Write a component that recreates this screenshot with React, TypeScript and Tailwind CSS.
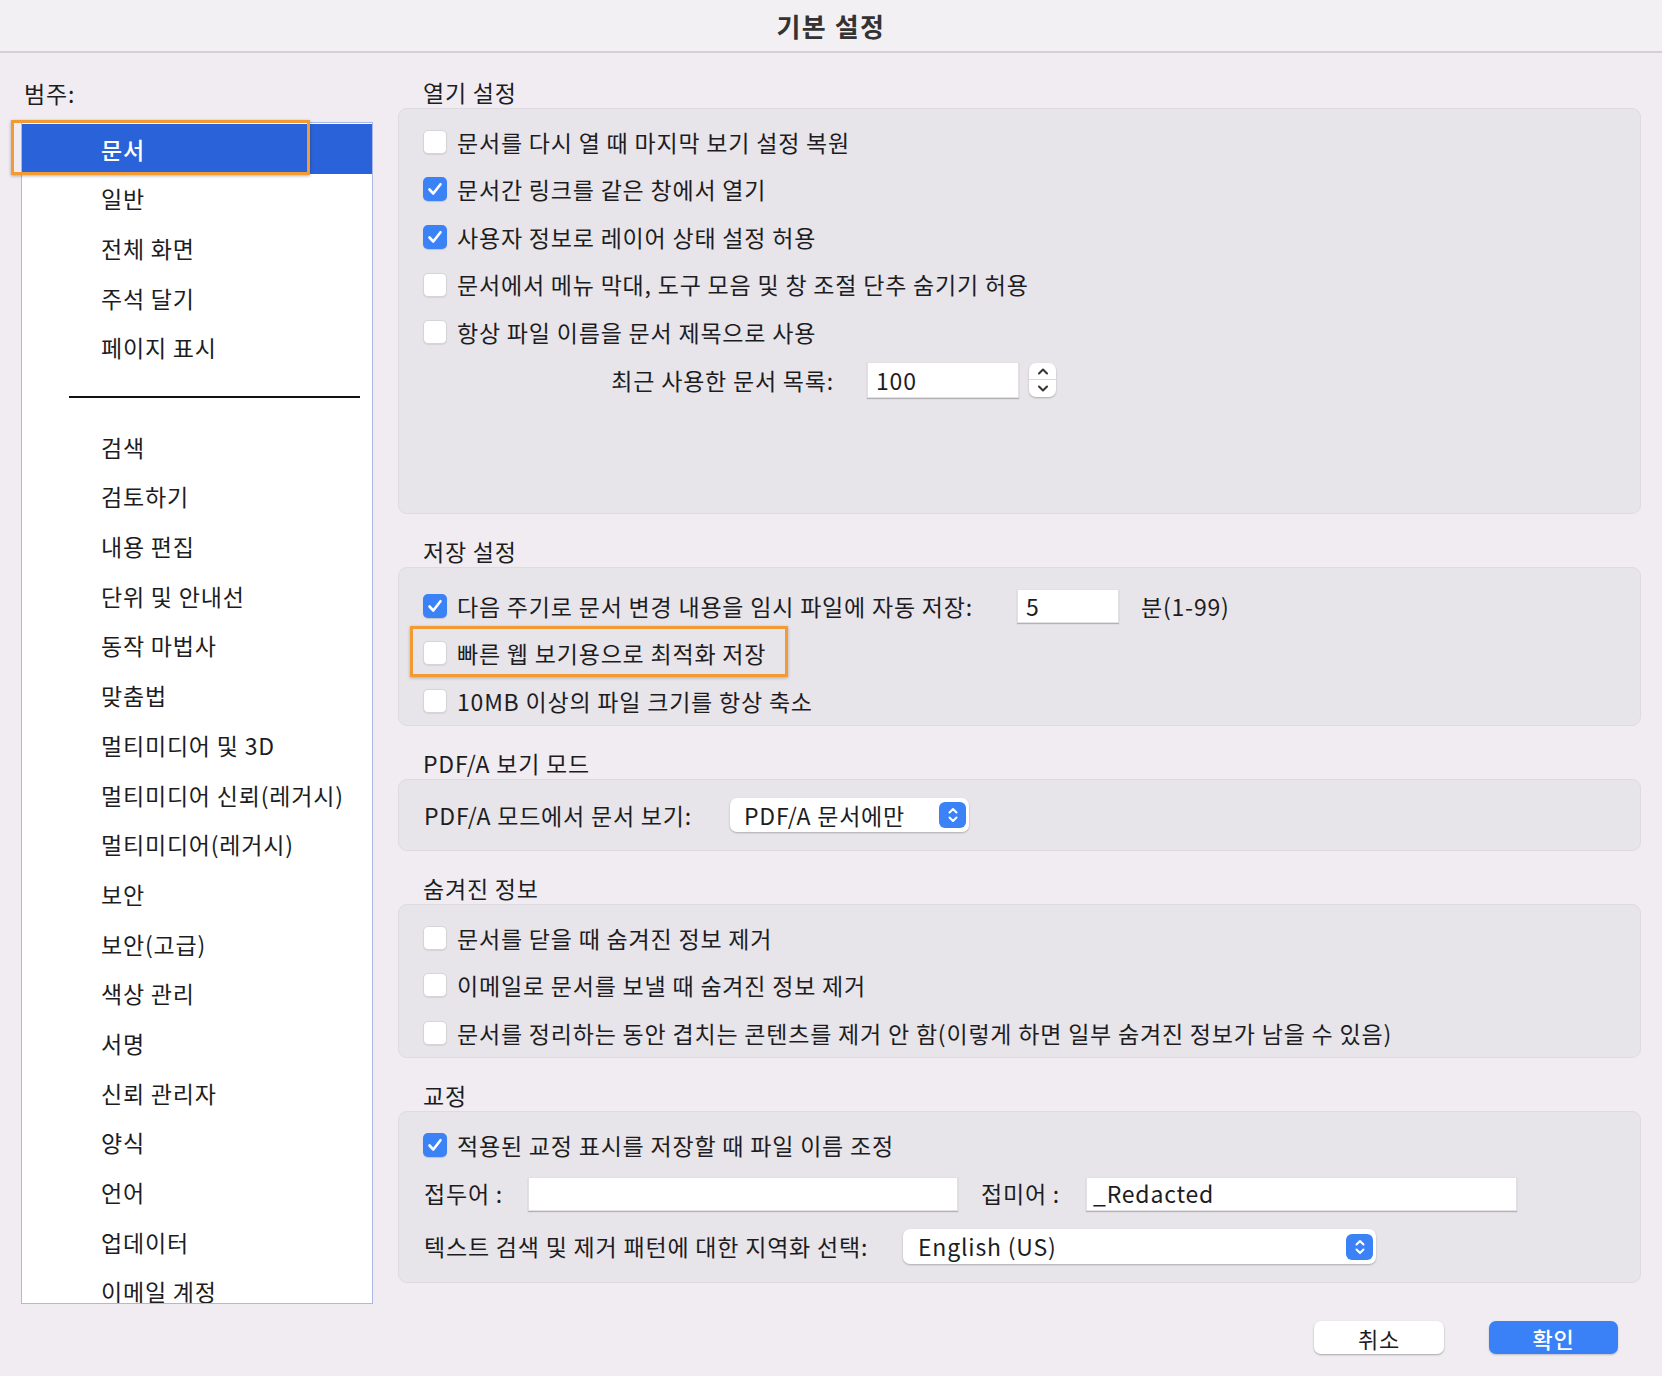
import React from 'react';

const font = "font-['Noto_Sans_CJK_KR','Noto_Sans',sans-serif]";

const categoriesTop = ['일반', '전체 화면', '주석 달기', '페이지 표시'];
const categoriesBottom = [
  '검색',
  '검토하기',
  '내용 편집',
  '단위 및 안내선',
  '동작 마법사',
  '맞춤법',
  '멀티미디어 및 3D',
  '멀티미디어 신뢰(레거시)',
  '멀티미디어(레거시)',
  '보안',
  '보안(고급)',
  '색상 관리',
  '서명',
  '신뢰 관리자',
  '양식',
  '언어',
  '업데이터',
  '이메일 계정',
];

const Checkbox = ({ checked }: { checked?: boolean }) =>
  checked ? (
    <span className="w-[24px] h-[24px] shrink-0 rounded-[5px] bg-[#3b82f7] flex items-center justify-center shadow-[0_1px_1px_rgba(0,0,0,0.15)]">
      <svg width="18" height="18" viewBox="0 0 18 18" fill="none">
        <path d="M3.5 9.5 L7.3 13.5 L14.5 4.2" stroke="white" strokeWidth="2.6" strokeLinecap="round" strokeLinejoin="round" />
      </svg>
    </span>
  ) : (
    <span className="w-[24px] h-[24px] shrink-0 rounded-[5px] bg-white border border-[#d6d3d9] shadow-[0_1px_1px_rgba(0,0,0,0.08)]" />
  );

const CheckRow = ({ label, checked }: { label: string; checked?: boolean }) => (
  <div className="h-[47.6px] flex items-center gap-[10px]">
    <Checkbox checked={checked} />
    <span className="whitespace-nowrap">{label}</span>
  </div>
);

const SectionTitle = ({ children, first }: { children: React.ReactNode; first?: boolean }) => (
  <div className={`h-[32px] leading-[32px] pl-[25px] ${first ? 'mt-[23px]' : 'mt-[21px]'}`}>{children}</div>
);

const Group = ({ className, children }: { className: string; children: React.ReactNode }) => (
  <div className={`relative rounded-[9px] bg-[#e7e4ea] border border-[#dedae1] ${className}`}>{children}</div>
);

const TextInput = ({ className, value }: { className: string; value?: string }) => (
  <div className={`bg-white border border-[#e2dfe5] shadow-[0_1px_1px_rgba(0,0,0,0.22)] flex items-center ${className}`}>
    {value}
  </div>
);

const BlueUpDown = () => (
  <span className="w-[27px] h-[26px] rounded-[6px] bg-[#3b82f7] flex items-center justify-center">
    <svg width="14" height="18" viewBox="0 0 14 18" fill="none">
      <path d="M3.5 6.5 L7 3 L10.5 6.5" stroke="white" strokeWidth="2" strokeLinecap="round" strokeLinejoin="round" />
      <path d="M3.5 11.5 L7 15 L10.5 11.5" stroke="white" strokeWidth="2" strokeLinecap="round" strokeLinejoin="round" />
    </svg>
  </span>
);

export default function App() {
  return (
    <div className={`w-[1662px] h-[1376px] bg-[#f0ecf1] text-[#1d1d1f] text-[23px] tracking-[0.8px] ${font} overflow-hidden flex flex-col`}>
      {/* 제목 표시줄 */}
      <div className="h-[53px] shrink-0 bg-[#f3f0f4] border-b-2 border-[#d3cfd5] flex items-center justify-center">
        <span className="text-[26px] font-bold text-[#333] tracking-[1.5px]">기본 설정</span>
      </div>

      <div className="flex flex-1">
        {/* 좌측 범주 */}
        <div className="w-[398px] shrink-0 pl-[21px]">
          <div className="h-[30px] leading-[30px] mt-[25px] mb-[14px] pl-[3px]">범주:</div>
          <div className="relative w-[352px]">
            <div className="h-[1182px] bg-white border border-[#a9b8e8] overflow-hidden pt-[1px]">
              <div className="h-[49.7px] flex items-center pl-[79px] bg-[#2a63d9] text-white font-medium">문서</div>
              {categoriesTop.map((c) => (
                <div key={c} className="h-[49.7px] flex items-center pl-[79px]">
                  {c}
                </div>
              ))}
              <div className="h-[49.7px] flex items-center">
                <div className="ml-[47px] w-[291px] h-[2px] bg-[#111]" />
              </div>
              {categoriesBottom.map((c) => (
                <div key={c} className="h-[49.7px] flex items-center pl-[79px] whitespace-nowrap">
                  {c}
                </div>
              ))}
            </div>
            <div className="absolute left-[-10px] top-[-2px] w-[299px] h-[55px] border-[3px] border-[#f29a34] shadow-[0_1px_3px_rgba(0,0,0,0.3)]" />
          </div>
        </div>

        {/* 우측 설정 */}
        <div className="w-[1243px] shrink-0">
          <SectionTitle first>열기 설정</SectionTitle>
          <Group className="h-[406px] pt-[9px] pl-[24px]">
            <CheckRow label="문서를 다시 열 때 마지막 보기 설정 복원" />
            <CheckRow label="문서간 링크를 같은 창에서 열기" checked />
            <CheckRow label="사용자 정보로 레이어 상태 설정 허용" checked />
            <CheckRow label="문서에서 메뉴 막대, 도구 모음 및 창 조절 단추 숨기기 허용" />
            <CheckRow label="항상 파일 이름을 문서 제목으로 사용" />
            <div className="h-[47.6px] flex items-center">
              <div className="w-[411px] text-right whitespace-nowrap">최근 사용한 문서 목록:</div>
              <TextInput className="ml-[33px] w-[152px] h-[36px] pl-[8px]" value="100" />
              <div className="ml-[10px] w-[27px] h-[34px] rounded-[7px] bg-white shadow-[0_1px_2px_rgba(0,0,0,0.25)] flex flex-col items-center">
                <div className="flex-1 flex items-center">
                  <svg width="14" height="9" viewBox="0 0 14 9" fill="none">
                    <path d="M3 6.5 L7 2.5 L11 6.5" stroke="#333" strokeWidth="2" strokeLinecap="round" strokeLinejoin="round" />
                  </svg>
                </div>
                <div className="w-full h-px bg-[#d9d6dc]" />
                <div className="flex-1 flex items-center">
                  <svg width="14" height="9" viewBox="0 0 14 9" fill="none">
                    <path d="M3 2.5 L7 6.5 L11 2.5" stroke="#333" strokeWidth="2" strokeLinecap="round" strokeLinejoin="round" />
                  </svg>
                </div>
              </div>
            </div>
          </Group>

          <SectionTitle>저장 설정</SectionTitle>
          <Group className="h-[159px] pt-[14px] pl-[24px]">
            <div className="h-[47.5px] flex items-center">
              <div className="w-[594px] flex items-center gap-[10px]">
                <Checkbox checked />
                <span className="whitespace-nowrap">다음 주기로 문서 변경 내용을 임시 파일에 자동 저장:</span>
              </div>
              <TextInput className="w-[102px] h-[34px] pl-[8px]" value="5" />
              <span className="ml-[22px]">분(1-99)</span>
            </div>
            <CheckRow label="빠른 웹 보기용으로 최적화 저장" />
            <CheckRow label="10MB 이상의 파일 크기를 항상 축소" />
            <div className="absolute left-[11px] top-[58px] w-[378px] h-[51px] border-[3px] border-[#f29a34] shadow-[0_1px_3px_rgba(0,0,0,0.25)]" />
          </Group>

          <SectionTitle>PDF/A 보기 모드</SectionTitle>
          <Group className="h-[72px] pl-[25px] flex items-center">
            <div className="w-[306px] whitespace-nowrap">PDF/A 모드에서 문서 보기:</div>
            <div className="w-[239px] h-[34px] rounded-[7px] bg-white shadow-[0_1px_2px_rgba(0,0,0,0.25)] flex items-center justify-between pl-[14px] pr-[3px]">
              <span>PDF/A 문서에만</span>
              <BlueUpDown />
            </div>
          </Group>

          <SectionTitle>숨겨진 정보</SectionTitle>
          <Group className="h-[154px] pt-[9px] pl-[24px]">
            <CheckRow label="문서를 닫을 때 숨겨진 정보 제거" />
            <CheckRow label="이메일로 문서를 보낼 때 숨겨진 정보 제거" />
            <CheckRow label="문서를 정리하는 동안 겹치는 콘텐츠를 제거 안 함(이렇게 하면 일부 숨겨진 정보가 남을 수 있음)" />
          </Group>

          <SectionTitle>교정</SectionTitle>
          <Group className="h-[172px] pt-[9px] pl-[24px]">
            <CheckRow label="적용된 교정 표시를 저장할 때 파일 이름 조정" checked />
            <div className="h-[50px] flex items-center pl-[1px]">
              <div className="w-[104px]">접두어 :</div>
              <TextInput className="w-[430px] h-[34px]" />
              <div className="ml-[23px] w-[105px]">접미어 :</div>
              <TextInput className="w-[431px] h-[34px] pl-[6px]" value="_Redacted" />
            </div>
            <div className="h-[56px] flex items-center pl-[1px]">
              <div className="w-[479px] whitespace-nowrap">텍스트 검색 및 제거 패턴에 대한 지역화 선택:</div>
              <div className="w-[473px] h-[35px] rounded-[7px] bg-white shadow-[0_1px_2px_rgba(0,0,0,0.25)] flex items-center justify-between pl-[15px] pr-[3px]">
                <span>English (US)</span>
                <BlueUpDown />
              </div>
            </div>
          </Group>

          {/* 하단 버튼 */}
          <div className="mt-[38px] flex justify-end gap-[45px] pr-[23px]">
            <button className="w-[130px] h-[33px] rounded-[7px] bg-white shadow-[0_1px_2px_rgba(0,0,0,0.3)] text-[22px] leading-none">취소</button>
            <button className="w-[129px] h-[33px] rounded-[7px] bg-[#3a80f6] text-white font-medium shadow-[0_1px_2px_rgba(0,0,0,0.2)] text-[22px] leading-none">확인</button>
          </div>
        </div>
      </div>
    </div>
  );
}
